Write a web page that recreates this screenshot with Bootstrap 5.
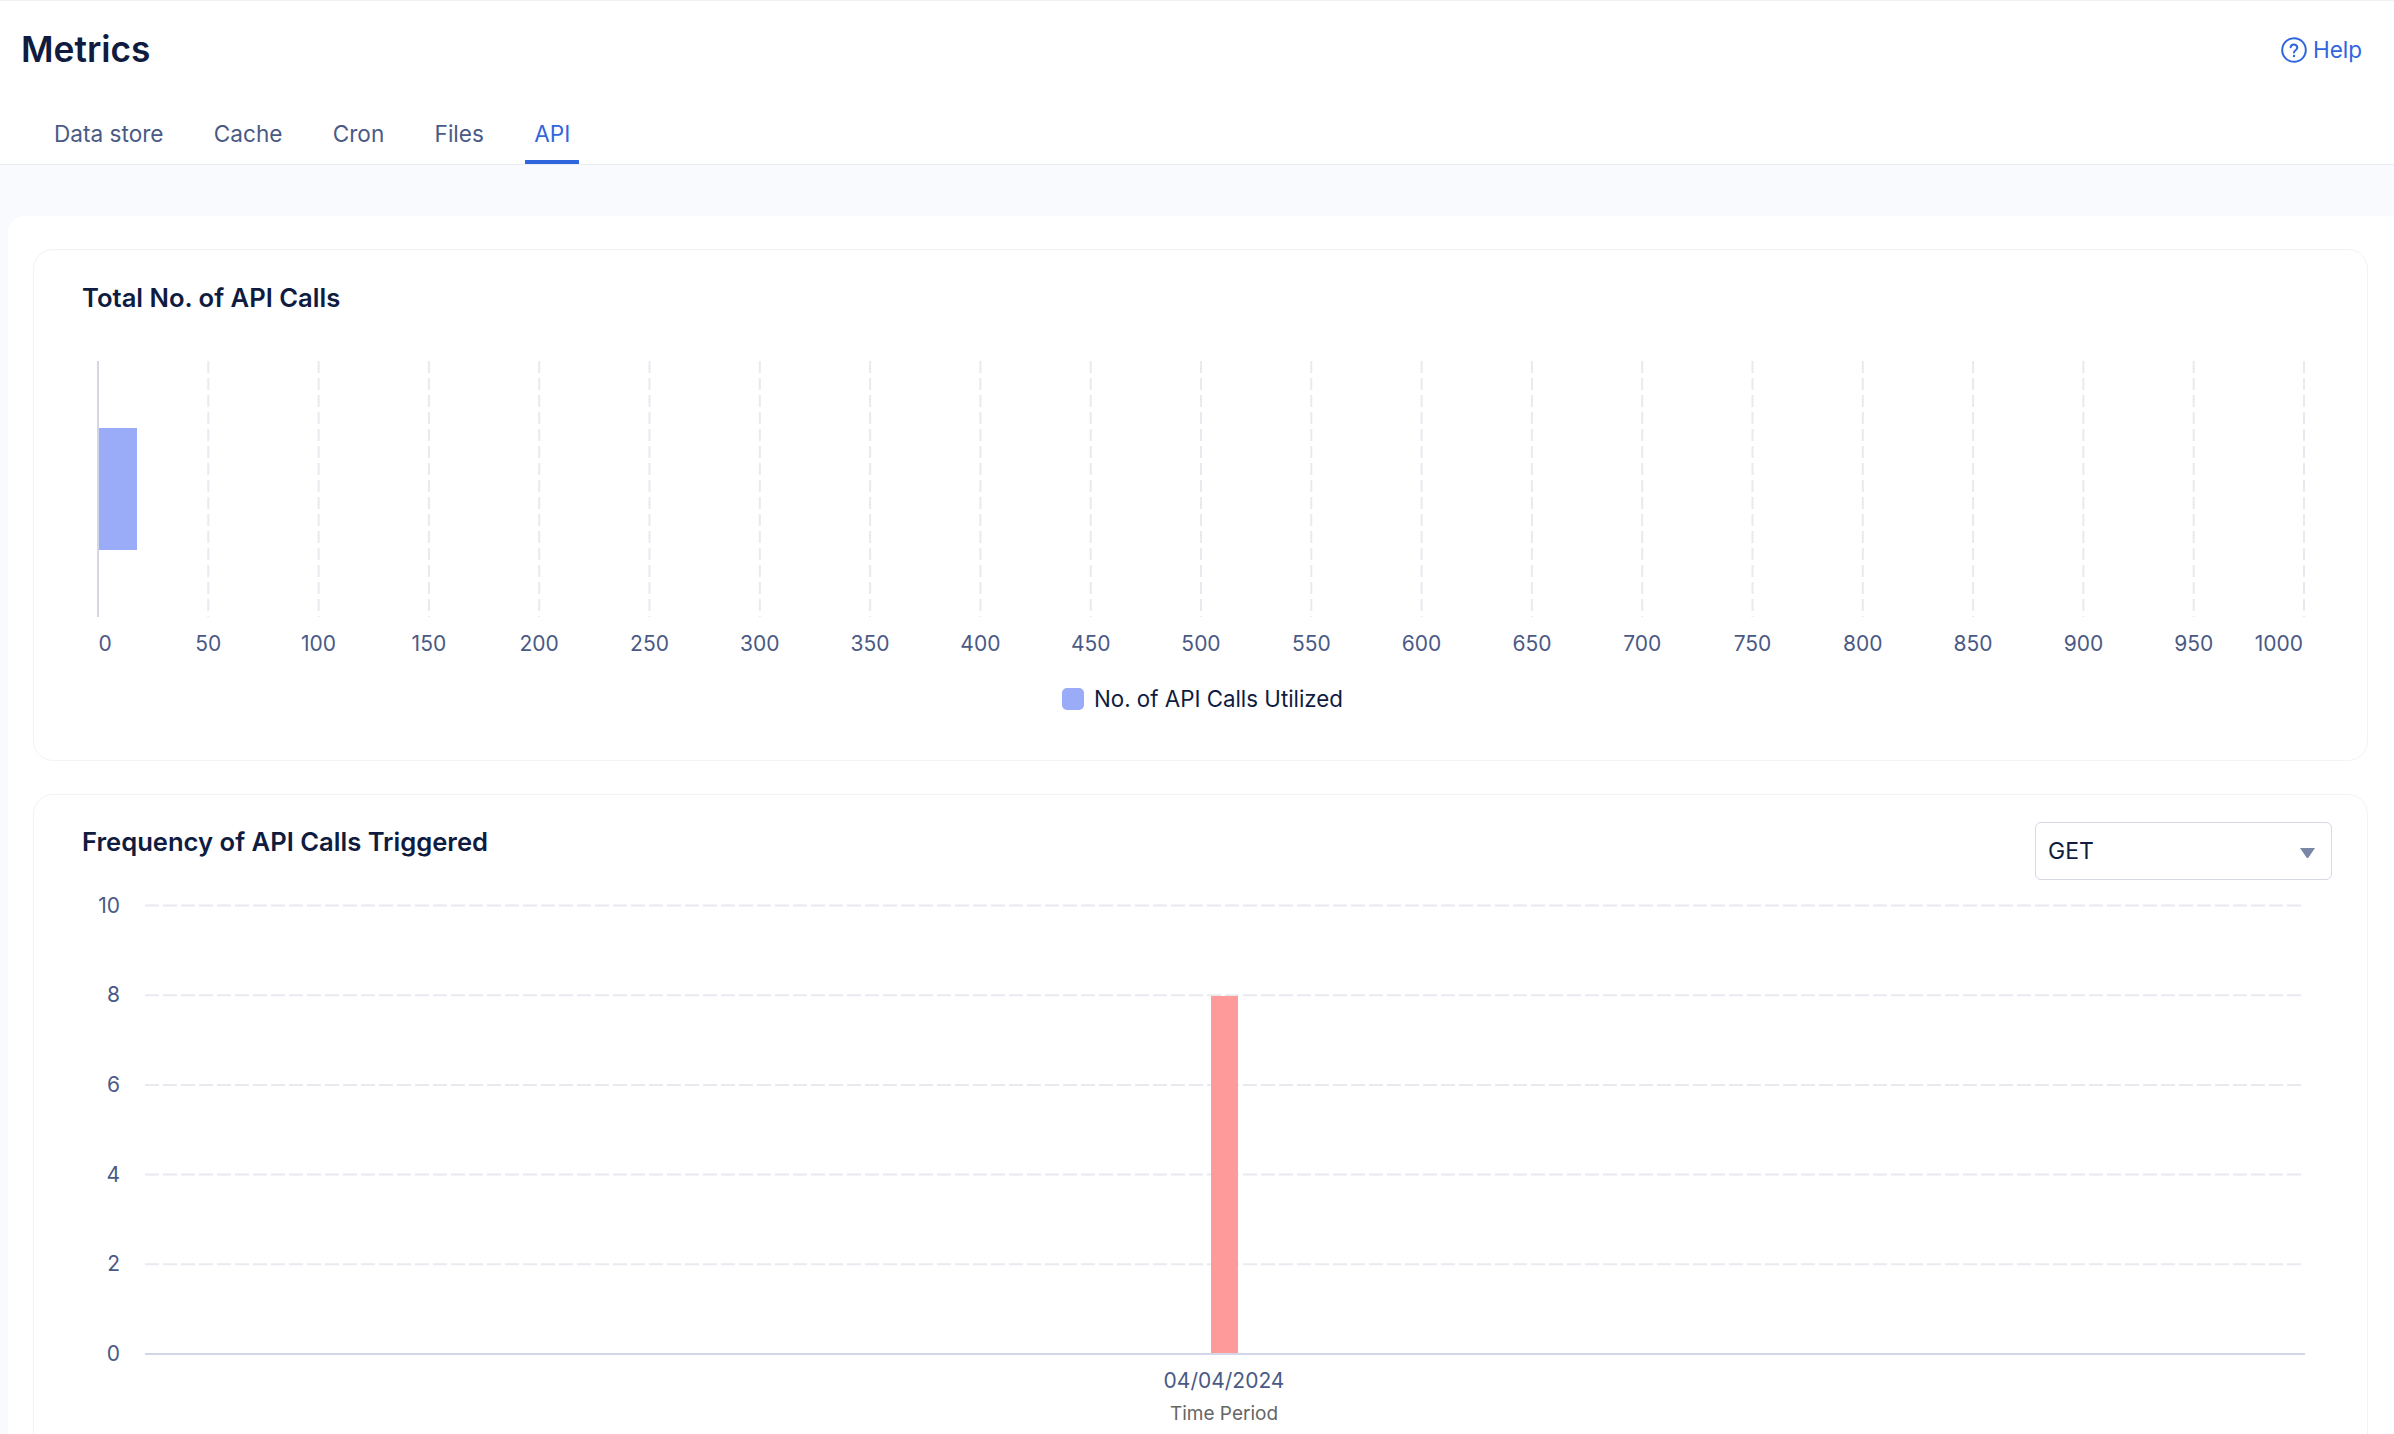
<!DOCTYPE html>
<html lang="en">
<head>
  <meta charset="UTF-8">
  <title>Metrics</title>
  <link href="https://cdn.jsdelivr.net/npm/bootstrap@5.3.3/dist/css/bootstrap.min.css" rel="stylesheet">
  <style>
    html, body { height: 100%; overflow: hidden; }
    body { font-family: Inter, "Liberation Sans", sans-serif; background: #f8fafe; color: #0f1c3f; }
    .page-head { background: #fff; height: 165px; border-top: 1px solid #eff0f3; border-bottom: 1px solid #e9ecf2; }
    .head-row { height: 98px; padding: 0 32px 0 21px; }
    .page-name { font-size: 35.3px; font-weight: 600; margin: 0; line-height: 1; color: #0f1c3f; }
    .help-link { color: #2f66dd; font-size: 22.5px; text-decoration: none; gap: 6px; }
    .metric-tabs { padding-left: 45px; gap: 32.3px; height: 65px; }
    .metric-tabs .nav-link { color: #4a5a85; font-size: 22.6px; padding: 4px 9px 0; line-height: 61px; border-bottom: 4px solid transparent; height: 65px; }
    .metric-tabs .nav-link.active { color: #2f66dd; border-bottom-color: #2f66dd; }
    .panel-wrap { background: #fff; margin: 51px 0 0 8px; border-radius: 16px 0 0 0; padding: 33px 26px 0 25px; }
    .chart-box { border: 1px solid #f2f3f6; border-radius: 20px; background: #fff; position: relative; }
    .chart-box + .chart-box { margin-top: 33px; }
    .box-one { height: 512px; padding: 32px 48px 0; }
    .box-two { height: 700px; padding: 31px 48px 0; }
    .box-title { font-size: 25.6px; font-weight: 600; margin: 0; line-height: 32px; color: #0f1c3f; }
    .chart-svg { display: block; position: absolute; left: -1px; top: -1px; }
    .chart-svg text { font-family: Inter, "Liberation Sans", sans-serif; font-size: 21px; fill: #4a5a85; }
    .chart-svg .axis-name { font-size: 19px; fill: #666; }
    .legend-row { position: absolute; left: 1028px; top: 435px; gap: 10px; font-size: 22.3px; line-height: 28px; }
    .legend-dot { width: 22px; height: 22px; border-radius: 5px; background: #9aabf8; }
    .method-select { position: absolute; left: 2001px; top: 27px; width: 297px; height: 58px; font-size: 23px; color: #0f1c3f; border: 1px solid #d5d9e5; border-radius: 6px; padding: 0 12px; background: #fff; z-index: 1; }
    .method-select svg { margin-right: 4px; margin-top: 4px; }
  </style>
</head>
<body>
  <header class="page-head">
    <div class="head-row d-flex justify-content-between align-items-center">
      <h1 class="page-name">Metrics</h1>
      <a href="#" class="help-link d-flex align-items-center">
        <svg width="26" height="26" viewBox="0 0 26 26" fill="none" stroke="#2f66dd" stroke-width="2">
          <circle cx="13" cy="13" r="11.8"/>
          <path d="M9.6 10.2a3.4 3.4 0 0 1 6.7.6c0 2.2-3.3 2.6-3.3 4.6" stroke-linecap="round"/>
          <circle cx="13" cy="19" r="1.2" fill="#2f66dd" stroke="none"/>
        </svg>
        Help
      </a>
    </div>
    <ul class="nav metric-tabs">
      <li class="nav-item"><a class="nav-link" href="#">Data store</a></li>
      <li class="nav-item"><a class="nav-link" href="#">Cache</a></li>
      <li class="nav-item"><a class="nav-link" href="#">Cron</a></li>
      <li class="nav-item"><a class="nav-link" href="#">Files</a></li>
      <li class="nav-item"><a class="nav-link active" href="#">API</a></li>
    </ul>
  </header>

  <main class="panel-wrap">
    <!-- Total calls -->
    <section class="chart-box box-one">
      <h2 class="box-title">Total No. of API Calls</h2>
      <svg id="barChart" class="chart-svg" width="2335" height="420"></svg>
      <div class="legend-row d-flex align-items-center">
        <span class="legend-dot"></span>
        <span>No. of API Calls Utilized</span>
      </div>
    </section>

    <!-- Frequency -->
    <section class="chart-box box-two">
      <h2 class="box-title">Frequency of API Calls Triggered</h2>
      <div class="method-select d-flex justify-content-between align-items-center">
        <span>GET</span>
        <svg width="15" height="10" viewBox="0 0 15 10"><path d="M0 0h15L8.5 9.5a1.2 1.2 0 0 1-2 0z" fill="#7a86a8"/></svg>
      </div>
      <svg id="freqChart" class="chart-svg" width="2335" height="700"></svg>
    </section>
  </main>

  <script>
    const svgNs = "http://www.w3.org/2000/svg";

    function add(svg, tag, attrs, text) {
      const el = document.createElementNS(svgNs, tag);
      Object.keys(attrs).forEach(k => el.setAttribute(k, attrs[k]));
      if (text !== undefined) el.textContent = text;
      svg.appendChild(el);
    }

    // chart coords are relative to the card, card starts at (33,249) and (33,793)
    const bar = document.getElementById("barChart");
    for (let v = 50; v <= 1000; v += 50) {
      const x = 65 + v * 2.206;
      add(bar, "line", { x1: x, x2: x, y1: 112, y2: 368, stroke: "#e8eaef", "stroke-width": 2, "stroke-dasharray": "12 5" });
    }
    add(bar, "line", { x1: 65, x2: 65, y1: 112, y2: 368, stroke: "#d3d6e6", "stroke-width": 2 });
    add(bar, "rect", { x: 66, y: 179, width: 38, height: 122, fill: "#9aabf8" });
    for (let v = 0; v <= 1000; v += 50) {
      let x = 65 + v * 2.206, anchor = "middle";
      if (v === 0) x = 72;
      if (v === 1000) { x = 2270; anchor = "end"; }
      add(bar, "text", { x: x, y: 402, "text-anchor": anchor }, v);
    }

    const freq = document.getElementById("freqChart");
    for (let v = 2; v <= 10; v += 2) {
      const y = 560 - v * 44.85;
      add(freq, "line", { x1: 112, x2: 2272, y1: y, y2: y, stroke: "#e8eaef", "stroke-width": 2, "stroke-dasharray": "14 4" });
    }
    add(freq, "rect", { x: 1178, y: 202, width: 27, height: 358, fill: "#ff9a9a" });
    add(freq, "line", { x1: 112, x2: 2272, y1: 560, y2: 560, stroke: "#d3d6e6", "stroke-width": 2 });
    for (let v = 0; v <= 10; v += 2) {
      add(freq, "text", { x: 87, y: 567 - v * 44.85, "text-anchor": "end" }, v);
    }
    add(freq, "text", { x: 1191, y: 594, "text-anchor": "middle" }, "04/04/2024");
    add(freq, "text", { x: 1191, y: 626, "text-anchor": "middle", class: "axis-name" }, "Time Period");
  </script>
  <script src="https://cdn.jsdelivr.net/npm/bootstrap@5.3.3/dist/js/bootstrap.bundle.min.js"></script>
</body>
</html>
